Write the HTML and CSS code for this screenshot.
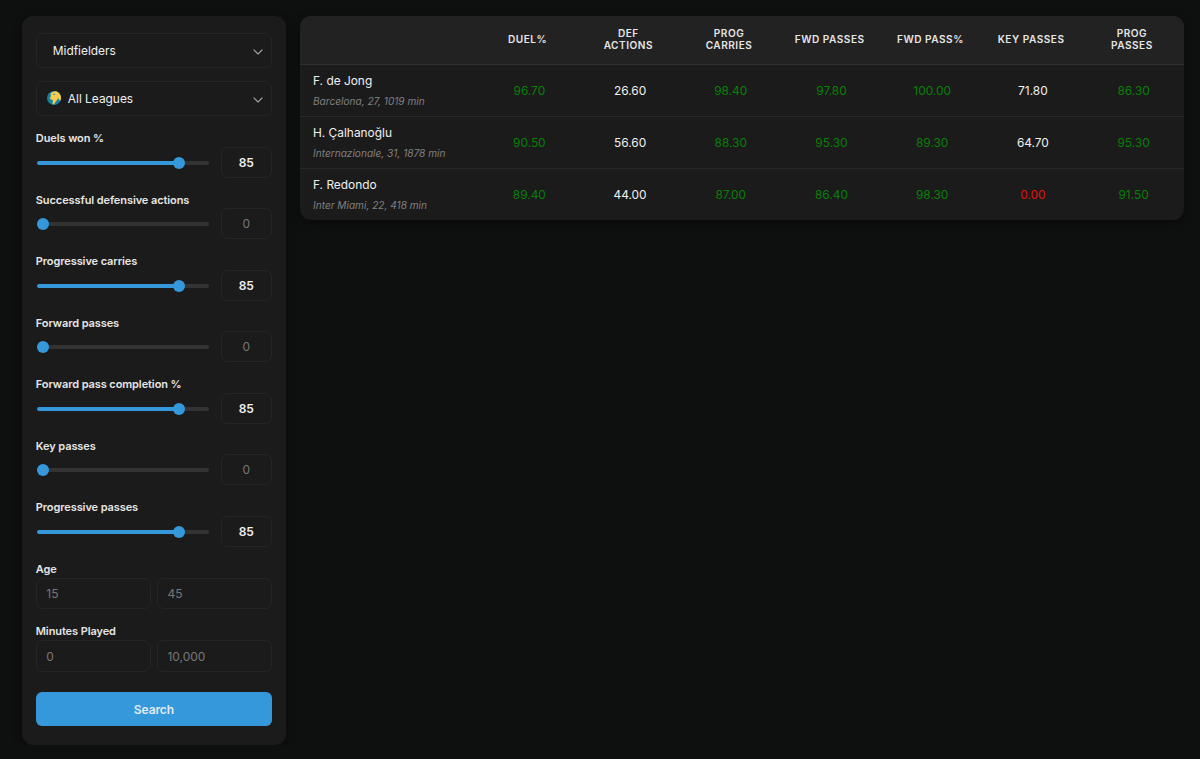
FILE: index.html
```html
<!DOCTYPE html>
<html lang="en">

<head>
    <meta charset="UTF-8">
    <meta name="viewport" content="width=device-width, initial-scale=1.0">
    <title>Player Search</title>
    <link rel="stylesheet" href="styles.css">
</head>

<body>
    <div class="container">
        <form class="sidebar">
            <div class="select">
                <span class="select-text no-icon">Midfielders</span>
                <svg class="chevron" viewBox="0 0 10 6"><path d="M1 1l4 4 4-4" /></svg>
            </div>
            <div class="select">
                <svg class="globe" viewBox="0 0 14 14">
                    <circle cx="7" cy="7" r="7" fill="#14839f" />
                    <path d="M3.500 2.500L6 .8l2.500-.6C11.800.7 14 3.600 14 7c0 1-.3 2-.7 2.800l-1.300-1-.6-1.600-.9.500-.6 1.800-1.400 1.300-1.200 2.200-1.200.6-.7-1.700.6-1.900-.6-1.300-1.700-.1-.7-1.600.9-1.900z" fill="#f8ca4d" />
                    <path d="M5.600 3.700l1.800-1.100 1.200.5-1.400 1z" fill="#3a93a0" />
                </svg>
                <span class="select-text">All Leagues</span>
                <svg class="chevron" viewBox="0 0 10 6"><path d="M1 1l4 4 4-4" /></svg>
            </div>

            <div class="filter">
                <label>Duels won %</label>
                <div class="slider-row">
                    <input type="range" class="slider" min="0" max="100" value="85" style="--value: 85">
                    <input type="text" class="number" placeholder="0" value="85">
                </div>
            </div>
            <div class="filter">
                <label>Successful defensive actions</label>
                <div class="slider-row">
                    <input type="range" class="slider" min="0" max="100" value="0" style="--value: 0">
                    <input type="text" class="number" placeholder="0">
                </div>
            </div>
            <div class="filter">
                <label>Progressive carries</label>
                <div class="slider-row">
                    <input type="range" class="slider" min="0" max="100" value="85" style="--value: 85">
                    <input type="text" class="number" placeholder="0" value="85">
                </div>
            </div>
            <div class="filter">
                <label>Forward passes</label>
                <div class="slider-row">
                    <input type="range" class="slider" min="0" max="100" value="0" style="--value: 0">
                    <input type="text" class="number" placeholder="0">
                </div>
            </div>
            <div class="filter">
                <label>Forward pass completion %</label>
                <div class="slider-row">
                    <input type="range" class="slider" min="0" max="100" value="85" style="--value: 85">
                    <input type="text" class="number" placeholder="0" value="85">
                </div>
            </div>
            <div class="filter">
                <label>Key passes</label>
                <div class="slider-row">
                    <input type="range" class="slider" min="0" max="100" value="0" style="--value: 0">
                    <input type="text" class="number" placeholder="0">
                </div>
            </div>
            <div class="filter">
                <label>Progressive passes</label>
                <div class="slider-row">
                    <input type="range" class="slider" min="0" max="100" value="85" style="--value: 85">
                    <input type="text" class="number" placeholder="0" value="85">
                </div>
            </div>

            <div class="filter">
                <label>Age</label>
                <div class="range-row">
                    <input type="text" placeholder="15">
                    <input type="text" placeholder="45">
                </div>
            </div>
            <div class="filter">
                <label>Minutes Played</label>
                <div class="range-row">
                    <input type="text" placeholder="0">
                    <input type="text" placeholder="10,000">
                </div>
            </div>
            <button type="button" class="search-btn">Search</button>
        </form>

        <table class="results">
            <thead>
                <tr>
                    <th class="player-col"></th>
                    <th>Duel%</th>
                    <th>Def<br>Actions</th>
                    <th>Prog<br>Carries</th>
                    <th>Fwd Passes</th>
                    <th>Fwd Pass%</th>
                    <th>Key Passes</th>
                    <th>Prog<br>Passes</th>
                </tr>
            </thead>
            <tbody>
                <tr>
                    <td class="player">
                        <div class="name">F. de Jong</div>
                        <div class="info">Barcelona, 27, 1019 min</div>
                    </td>
                    <td class="high">96.70</td>
                    <td>26.60</td>
                    <td class="high">98.40</td>
                    <td class="high">97.80</td>
                    <td class="high">100.00</td>
                    <td>71.80</td>
                    <td class="high">86.30</td>
                </tr>
                <tr>
                    <td class="player">
                        <div class="name">H. Çalhanoğlu</div>
                        <div class="info">Internazionale, 31, 1878 min</div>
                    </td>
                    <td class="high">90.50</td>
                    <td>56.60</td>
                    <td class="high">88.30</td>
                    <td class="high">95.30</td>
                    <td class="high">89.30</td>
                    <td>64.70</td>
                    <td class="high">95.30</td>
                </tr>
                <tr>
                    <td class="player">
                        <div class="name">F. Redondo</div>
                        <div class="info">Inter Miami, 22, 418 min</div>
                    </td>
                    <td class="high">89.40</td>
                    <td>44.00</td>
                    <td class="high">87.00</td>
                    <td class="high">86.40</td>
                    <td class="high">98.30</td>
                    <td class="low">0.00</td>
                    <td class="high">91.50</td>
                </tr>
            </tbody>
        </table>
    </div>
</body>

</html>
```

FILE: styles.css
```css
* {
    box-sizing: border-box;
}

body {
    font-family: Inter, sans-serif;
    background-color: #0e100f;
    color: #f0f0f0;
    margin: 0;
    font-size: 11.9px;
}

.container {
    display: flex;
    align-items: flex-start;
    gap: 14px;
    padding: 16px 16px 0 21.5px;
}

.sidebar {
    width: 264.5px;
    height: 729px;
    flex-shrink: 0;
    background-color: #1b1b1b;
    border-radius: 11px;
    padding: 17.4px 14px 0 14.3px;
    box-shadow: 0 3px 10px rgba(0, 0, 0, 0.4);
}

/* Dropdowns */
.select {
    display: flex;
    align-items: center;
    height: 35px;
    margin-bottom: 13px;
    padding: 0 8px 0 10px;
    border: 1px solid #252525;
    border-radius: 7px;
}

.select-text {
    flex: 1;
}

.no-icon {
    padding-left: 6px;
}

.globe {
    width: 14px;
    height: 14px;
    margin: -1px 7px 0 0;
}

.chevron {
    width: 10px;
    height: 6px;
    margin-top: 2px;
    fill: none;
    stroke: #a0a0a0;
    stroke-width: 1.1;
    stroke-linecap: round;
    stroke-linejoin: round;
}

/* Filters */
.filter {
    padding-top: 1px;
    margin-bottom: 14px;
}

.filter label {
    display: block;
    height: 17px;
    line-height: 17.5px;
    font-size: 11px;
    font-weight: 600;
    letter-spacing: -0.09px;
    color: #e6e6e6;
}

.filter input[type="text"] {
    font-family: inherit;
    font-size: 12px;
    color: #f0f0f0;
    background: transparent;
    border: 1px solid #252525;
    border-radius: 7px;
    outline: none;
}

.filter input::placeholder {
    color: #777;
    font-weight: 400;
}

.slider-row {
    display: flex;
    align-items: center;
    justify-content: space-between;
    height: 29.5px;
}

.filter .number {
    width: 51.5px;
    height: 31px;
    padding: 0;
    text-align: center;
    font-weight: 600;
}

.slider {
    appearance: none;
    width: 172px;
    height: 12px;
    margin: 1px 0 0 1px;
    background: transparent;
}

.slider::-webkit-slider-runnable-track {
    height: 4px;
    border-radius: 2px;
    background: linear-gradient(#3498db, #3498db) no-repeat #333;
    background-size: calc(var(--value) * 1%) 100%;
}

.slider::-webkit-slider-thumb {
    appearance: none;
    width: 12px;
    height: 12px;
    margin-top: -4px;
    border-radius: 50%;
    background: #3498db;
}

.range-row {
    display: flex;
    gap: 6px;
}

.filter .range-row input {
    flex: 1;
    min-width: 0;
    height: 31.5px;
    padding: 0 9.5px;
}

.filter:nth-of-type(11) {
    margin-top: -1px;
}

.search-btn {
    display: block;
    width: 100%;
    height: 33.5px;
    margin-top: 20.5px;
    border: none;
    border-radius: 6px;
    background-color: #3498db;
    color: #e0ebf4;
    font-family: inherit;
    font-size: 12px;
    font-weight: 600;
    letter-spacing: -0.1px;
    cursor: pointer;
}

/* Results table */
.results {
    width: 884px;
    table-layout: fixed;
    border-spacing: 0;
    background-color: #1b1b1b;
    border-radius: 11px;
    overflow: hidden;
    box-shadow: 0 3px 10px rgba(0, 0, 0, 0.4);
}

.results th {
    height: 49px;
    padding: 0 3.5px 2px 0;
    background-color: #222;
    border-bottom: 1px solid #303030;
    color: #e6e6e6;
    font-size: 10.1px;
    line-height: 12px;
    font-weight: 600;
    letter-spacing: 0.5px;
    text-transform: uppercase;
}

.results .player-col {
    width: 179px;
}

.results td {
    height: 52px;
    padding: 0;
    border-bottom: 1px solid #282828;
    text-align: center;
}

.results tr:last-child td {
    height: 51px;
    border-bottom: none;
}

.results .player {
    padding: 0 0 0 13px;
    text-align: left;
}

.name {
    line-height: 16px;
}

.info {
    margin-top: 4px;
    font-size: 10.1px;
    line-height: 16px;
    font-style: italic;
    color: #808080;
}

.results .high {
    color: #078007;
}

.results .low {
    color: #e01010;
}
```
